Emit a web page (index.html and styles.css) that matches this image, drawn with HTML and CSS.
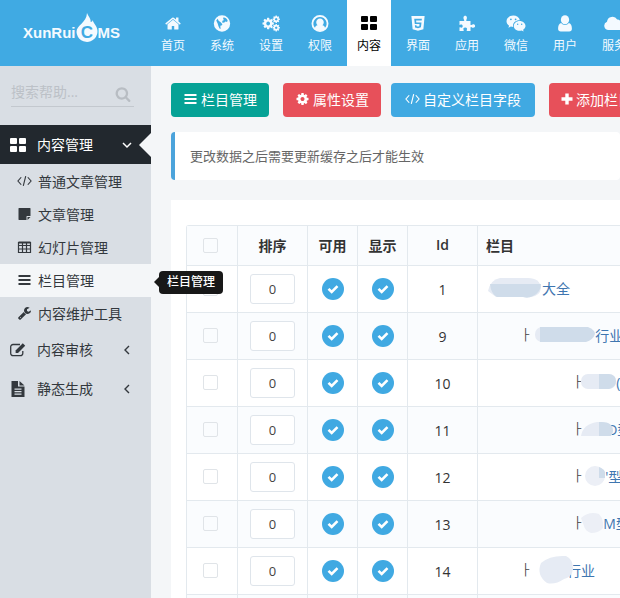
FILE: index.html
```html
<!DOCTYPE html>
<html lang="zh-CN">
<head>
    <meta charset="UTF-8">
    <title>栏目管理</title>
    <link rel="stylesheet" href="styles.css">
</head>
<body>

<!-- icon sprite -->
<svg class="sprite" aria-hidden="true">
    <symbol id="i-home" viewBox="0 0 1792 1792"><path d="M1472 992v480q0 26-19 45t-45 19h-384v-384h-256v384h-384q-26 0-45-19t-19-45v-480q0-1 .5-3t.5-3l575-474 575 474q1 2 1 6zm223-69l-62 74q-8 9-21 11h-3q-13 0-21-7l-692-577-692 577q-12 8-24 7-13-2-21-11l-62-74q-8-10-7-23.500t11-21.500l719-599q32-26 76-26t76 26l244 204v-195q0-14 9-23t23-9h192q14 0 23 9t9 23v408l219 182q10 8 11 21.500t-7 23.500z"/></symbol>
    <symbol id="i-globe" viewBox="0 0 16 16"><path fill-rule="evenodd" d="M8 .3a7.700 7.700 0 1 0 0 15.400A7.700 7.700 0 0 0 8 .3zM9.500 2.200l2.300.8 1.500 2-.5 1.500-1.600-.5-1.300 1.400-1.800-.3.300-1.600 1.500-.8-.9-1zM2.600 5.200l1.400-1.700.8 1.800 2 1.500 1.600 1.800-.8 1.200-1.200.4.300 3-1-.4-1-2.300L4 8.300z"/></symbol>
    <symbol id="i-cog" viewBox="0 0 1792 1792"><path d="M1152 896q0-106-75-181t-181-75-181 75-75 181 75 181 181 75 181-75 75-181zm512-109v222q0 12-8 23t-20 13l-185 28q-19 54-39 91 35 50 107 138 10 12 10 25t-9 23q-27 37-99 108t-94 71q-12 0-26-9l-138-108q-44 23-91 38-16 136-29 186-7 28-36 28h-222q-14 0-24.500-8.500t-11.500-21.500l-28-184q-49-16-90-37l-141 107q-10 9-25 9-14 0-25-11-126-114-165-168-7-10-7-23 0-12 8-23 15-21 51-66.500t54-70.500q-27-50-41-99l-183-27q-13-2-21-12.500t-8-23.500v-222q0-12 8-23t19-13l186-28q14-46 39-92-40-57-107-138-10-12-10-24 0-10 9-23 26-36 98.500-107.500t94.500-71.500q13 0 26 10l138 107q44-23 91-38 16-136 29-186 7-28 36-28h222q14 0 24.500 8.500t11.500 21.500l28 184q49 16 90 37l142-107q9-9 24-9 13 0 25 10 129 119 165 170 7 8 7 22 0 12-8 23-15 21-51 66.500t-54 70.500q26 50 41 98l183 28q13 2 21 12.500t8 23.500z"/></symbol>
    <symbol id="i-cogs" viewBox="0 0 20 18">
        <use href="#i-cog" x="0" y="2" width="14" height="14"/>
        <use href="#i-cog" x="11" y="0" width="9" height="9"/>
        <use href="#i-cog" x="11" y="9" width="9" height="9"/>
    </symbol>
    <symbol id="i-user-circle" viewBox="0 0 18 18"><path fill-rule="evenodd" d="M9 0a9 9 0 1 0 0 18A9 9 0 0 0 9 0zm0 2a7 7 0 0 1 5.300 11.500c-.4-1.500-1.300-2.400-2.700-2.700a4 4 0 1 0-5.200 0c-1.400.3-2.300 1.200-2.700 2.700A7 7 0 0 1 9 2z"/></symbol>
    <symbol id="i-grid" viewBox="0 0 16 14"><rect width="7" height="6" rx="1"/><rect x="9" width="7" height="6" rx="1"/><rect y="8" width="7" height="6" rx="1"/><rect x="9" y="8" width="7" height="6" rx="1"/></symbol>
    <symbol id="i-html5" viewBox="0 0 16 18"><path fill-rule="evenodd" d="M1 1h14l-1.300 14L8 16.800 2.300 15zm3 3 .6 5.600h5l-.2 2.200-1.400.4-1.500-.4-.1-1H4.700l.2 2.400L8 14l3.100-.9.600-5.200H6.200L6 5.800h5.900l.2-1.800z"/></symbol>
    <symbol id="i-puzzle" viewBox="0 0 17 17"><path d="M1 6h4.300c.5 0 .7-.4.400-.9C4.400 3 5 .8 6.700.8S9 3 7.800 5.100c-.2.500 0 .9.500.9H12v3.500c0 .6.500.8 1 .4 1.700-1.200 3.600-.5 3.600 1.200s-2 2.300-3.600 1.100c-.5-.3-1-.1-1 .4V16H8.600c-.5 0-.7-.4-.4-.9.800-1.300.3-2.700-1.500-2.700s-2.300 1.400-1.500 2.700c.3.500 0 .9-.5.900H1v-3.300c0-.5.300-.6.700-.4 1.300.9 2.500.3 2.500-1.200S2.900 9 1.700 9.800c-.4.200-.7.100-.7-.4z"/></symbol>
    <symbol id="i-wechat" viewBox="0 0 20 17"><path fill-rule="evenodd" d="M7.300.5C3.500.5.500 3 .5 6.200c0 1.800 1 3.400 2.600 4.500l-.7 2.100 2.500-1.200c.8.200 1.500.3 2.300.3A5.300 5.300 0 0 1 7 10.500c0-3 2.900-5.300 6.300-5.300h.6C13.200 2.500 10.500.5 7.300.5zM4.900 3.400a.9.900 0 1 1 0 1.800.9.900 0 0 1 0-1.800zm4.700 0a.9.900 0 1 1 0 1.800.9.900 0 0 1 0-1.800zM13.700 6c-3.300 0-5.900 2.200-5.900 4.900s2.600 4.800 5.900 4.800c.7 0 1.300-.1 1.900-.3l2 1-.5-1.700c1.500-1 2.400-2.300 2.400-3.800 0-2.700-2.700-4.900-5.800-4.900zm-2 2.600a.7.700 0 1 1 0 1.400.7.700 0 0 1 0-1.400zm4 0a.7.700 0 1 1 0 1.400.7.700 0 0 1 0-1.400z"/></symbol>
    <symbol id="i-user" viewBox="0 0 14 16"><ellipse cx="7" cy="4.500" rx="3.900" ry="4.300"/><path d="M3.300 7.500C1.300 8 .5 10 .5 13c0 1.600 1 2.500 2.500 2.500h8c1.500 0 2.500-.9 2.500-2.500 0-3-.8-5-2.800-5.500A5 5 0 0 1 7 9.400a5 5 0 0 1-3.700-1.900z"/></symbol>
    <symbol id="i-cloud" viewBox="0 0 20 14"><path d="M4.500 13.500A4.300 4.300 0 0 1 3 5.200 5.500 5.500 0 0 1 13.200 3a3.200 3.200 0 0 1 3.600 3.600 3.500 3.500 0 0 1-.6 6.900z"/></symbol>
    <symbol id="i-search" viewBox="0 0 1792 1792"><path d="M1216 832q0-185-131.500-316.500t-316.500-131.500-316.500 131.500-131.500 316.500 131.500 316.500 316.500 131.500 316.500-131.500 131.500-316.500zm512 832q0 52-38 90t-90 38q-54 0-90-38l-343-342q-179 124-399 124-143 0-273.500-55.500t-225-150-150-225-55.500-273.500 55.500-273.500 150-225 225-150 273.500-55.500 273.500 55.500 225 150 150 225 55.500 273.500q0 220-124 399l343 343q37 37 37 90z"/></symbol>
    <symbol id="i-code" viewBox="0 0 16 12"><path d="M4.500 2 1 6l3.500 4M11.500 2 15 6l-3.500 4M9.300.8 6.700 11.200" fill="none" stroke="currentColor" stroke-width="1.200"/></symbol>
    <symbol id="i-note" viewBox="0 0 14 14"><path d="M1.500 1h11c.3 0 .5.200.5.500V9H9.500c-.3 0-.5.200-.5.500V13H1.500c-.3 0-.5-.2-.5-.5v-11c0-.3.200-.5.500-.5zM10 10h3l-3 3z"/></symbol>
    <symbol id="i-table" viewBox="0 0 14 14"><path d="M1 2.500h12v10H1zM1 5.500h12M1 9h12M5 2.500v10M9 2.500v10" fill="none" stroke="currentColor" stroke-width="1.200"/><path d="M1 1.500h12v2H1z"/></symbol>
    <symbol id="i-bars" viewBox="0 0 14 14"><path d="M1 2h12v2H1zM1 6h12v2H1zM1 10h12v2H1z"/></symbol>
    <symbol id="i-wrench" viewBox="0 0 1792 1792"><path d="M448 1472q0-26-19-45t-45-19-45 19-19 45 19 45 45 19 45-19 19-45zm644-420l-682 682q-37 37-90 37-52 0-91-37l-106-108q-38-36-38-90 0-53 38-91l681-681q39 98 114.500 173.500t173.500 114.500zm634-435q0 39-23 106-47 134-164.500 217.500t-258.500 83.500q-185 0-316.500-131.500t-131.500-316.500 131.500-316.500 316.500-131.500q58 0 121.500 16.500t107.500 46.500q16 11 16 28t-16 28l-293 169v224l193 107q5-3 79-48.500t135.500-81 70.500-35.500q15 0 23.500 10t8.500 25z"/></symbol>
    <symbol id="i-edit" viewBox="0 0 16 16"><path d="M10 2.500H3A2.300 2.300 0 0 0 .7 4.800v6.500A2.300 2.300 0 0 0 3 13.600h7.500a2.300 2.300 0 0 0 2.300-2.300V9" fill="none" stroke="currentColor" stroke-width="1.300"/><path d="m12.800 1.300 2.400 2.400-7.200 7.200H5.600V8.500z"/></symbol>
    <symbol id="i-file" viewBox="0 0 16 16"><path fill-rule="evenodd" d="M1.500 0H8v5.500h6.500V16h-13zM9.500 0l5 4.500h-5zM4.500 7.500v1.200h7V7.500zm0 2.500v1.200h7V10zm0 2.500v1.200h7v-1.200z"/></symbol>
    <symbol id="i-down" viewBox="0 0 10 10"><path d="m1 3 4 4 4-4" fill="none" stroke="currentColor" stroke-width="1.500"/></symbol>
    <symbol id="i-left" viewBox="0 0 10 10"><path d="M7 1 3 5l4 4" fill="none" stroke="currentColor" stroke-width="1.400"/></symbol>
    <symbol id="i-plus" viewBox="0 0 12 12"><path d="M4.300.5h3.400v3.800h3.800v3.400H7.700v3.800H4.300V7.700H.5V4.300h3.800z"/></symbol>
    <symbol id="i-check" viewBox="0 0 12 12"><path d="m1.500 5.800 3.200 3.200 5.800-5.800" fill="none" stroke="currentColor" stroke-width="2.600"/></symbol>
</svg>

<header class="header">
    <a class="logo" href="#">
        <span>XunRui</span>
        <svg class="flame" viewBox="0 0 22 30">
            <path d="M11 0c1 3 4.500 6 3.500 9 1.500 0 2-1 2.200-2 .3 2 1.500 3 2.600 5A10.500 10.500 0 1 1 .5 19C.5 12 10.500 10 11 0z"/>
            <text x="11" y="25" text-anchor="middle">C</text>
        </svg>
        <span>MS</span>
    </a>
    <nav class="top-menu">
        <a href="#"><svg><use href="#i-home"/></svg>首页</a>
        <a href="#"><svg><use href="#i-globe"/></svg>系统</a>
        <a href="#"><svg><use href="#i-cogs"/></svg>设置</a>
        <a href="#"><svg><use href="#i-user-circle"/></svg>权限</a>
        <a href="#" class="active"><svg><use href="#i-grid"/></svg>内容</a>
        <a href="#"><svg><use href="#i-html5"/></svg>界面</a>
        <a href="#"><svg><use href="#i-puzzle"/></svg>应用</a>
        <a href="#"><svg><use href="#i-wechat"/></svg>微信</a>
        <a href="#"><svg><use href="#i-user"/></svg>用户</a>
        <a href="#"><svg><use href="#i-cloud"/></svg>服务</a>
    </nav>
</header>

<div class="page">
    <aside class="sidebar">
        <form class="search">
            <input type="text" placeholder="搜索帮助..." aria-label="搜索帮助">
            <button type="button" aria-label="搜索"><svg><use href="#i-search"/></svg></button>
        </form>
        <a href="#" class="group open">
            <svg><use href="#i-grid"/></svg><span>内容管理</span><svg class="arrow"><use href="#i-down"/></svg>
        </a>
        <ul class="sub-menu">
            <li><a href="#"><svg><use href="#i-code"/></svg>普通文章管理</a></li>
            <li><a href="#"><svg><use href="#i-note"/></svg>文章管理</a></li>
            <li><a href="#"><svg><use href="#i-table"/></svg>幻灯片管理</a></li>
            <li class="active"><a href="#"><svg><use href="#i-bars"/></svg>栏目管理</a><span class="tooltip" role="tooltip">栏目管理</span></li>
            <li><a href="#"><svg><use href="#i-wrench"/></svg>内容维护工具</a></li>
        </ul>
        <a href="#" class="group">
            <svg><use href="#i-edit"/></svg><span>内容审核</span><svg class="arrow"><use href="#i-left"/></svg>
        </a>
        <a href="#" class="group">
            <svg><use href="#i-file"/></svg><span>静态生成</span><svg class="arrow"><use href="#i-left"/></svg>
        </a>
    </aside>

    <main class="content">
        <div class="toolbar">
            <button type="button" class="btn green"><svg><use href="#i-bars"/></svg>栏目管理</button>
            <button type="button" class="btn red"><svg><use href="#i-cog"/></svg>属性设置</button>
            <button type="button" class="btn blue"><svg><use href="#i-code"/></svg>自定义栏目字段</button>
            <button type="button" class="btn red"><svg class="small"><use href="#i-plus"/></svg>添加栏目</button>
        </div>

        <p class="note">更改数据之后需要更新缓存之后才能生效</p>

        <div class="card">
            <table>
                <colgroup>
                    <col class="col-check"><col class="col-order"><col class="col-flag"><col class="col-flag"><col class="col-id"><col>
                </colgroup>
                <thead>
                    <tr>
                        <th class="check"><input type="checkbox" aria-label="全选"></th>
                        <th>排序</th>
                        <th>可用</th>
                        <th>显示</th>
                        <th>Id</th>
                        <th class="name">栏目</th>
                    </tr>
                </thead>
                <tbody>
                    <tr>
                        <td class="check"><input type="checkbox" aria-label="选择 1"></td>
                        <td><input type="text" class="order" value="0" aria-label="排序 1"></td>
                        <td><a href="#" class="flag" aria-label="可用"><svg><use href="#i-check"/></svg></a></td>
                        <td><a href="#" class="flag" aria-label="显示"><svg><use href="#i-check"/></svg></a></td>
                        <td>1</td>
                        <td class="name"><div class="cat">
                            <svg class="mask" width="56" height="22"><path class="light" d="M2 14Q4 3 14 1h28q12 0 13 10-1 8-10 9H10z"/><path class="dark" d="M4 7h51q0 8-8 12-5 3-10 1H11Q5 17 4 7z"/></svg>
                            <a href="#">大全</a>
                        </div></td>
                    </tr>
                    <tr>
                        <td class="check"><input type="checkbox" aria-label="选择 9"></td>
                        <td><input type="text" class="order" value="0" aria-label="排序 9"></td>
                        <td><a href="#" class="flag" aria-label="可用"><svg><use href="#i-check"/></svg></a></td>
                        <td><a href="#" class="flag" aria-label="显示"><svg><use href="#i-check"/></svg></a></td>
                        <td>9</td>
                        <td class="name"><div class="cat level-1">
                            <span class="tree">├</span>
                            <svg class="mask gap" width="60" height="16"><rect class="light" width="30" height="15" rx="7"/><path class="dark" d="M5 0h48q7 3 7 7-2 6-9 8H5z"/></svg>
                            <a href="#">行业</a>
                        </div></td>
                    </tr>
                    <tr>
                        <td class="check"><input type="checkbox" aria-label="选择 10"></td>
                        <td><input type="text" class="order" value="0" aria-label="排序 10"></td>
                        <td><a href="#" class="flag" aria-label="可用"><svg><use href="#i-check"/></svg></a></td>
                        <td><a href="#" class="flag" aria-label="显示"><svg><use href="#i-check"/></svg></a></td>
                        <td>10</td>
                        <td class="name"><div class="cat level-2">
                            <span class="tree">├</span>
                            <svg class="mask" width="35" height="16"><rect class="light" width="35" height="15" rx="7"/><path class="dark" d="M18 0h10q7 1 7 7t-7 8H18z"/></svg>
                            <a href="#">(型</a>
                        </div></td>
                    </tr>
                    <tr>
                        <td class="check"><input type="checkbox" aria-label="选择 11"></td>
                        <td><input type="text" class="order" value="0" aria-label="排序 11"></td>
                        <td><a href="#" class="flag" aria-label="可用"><svg><use href="#i-check"/></svg></a></td>
                        <td><a href="#" class="flag" aria-label="显示"><svg><use href="#i-check"/></svg></a></td>
                        <td>11</td>
                        <td class="name"><div class="cat level-2">
                            <span class="tree">├</span>
                            <svg class="mask over" width="33" height="16"><path class="light" d="M0 15Q2 3 16 1h6q10 2 10 10l-2 4z"/><path class="dark" d="M18 1q14-1 14 9l-2 5H18z"/></svg>
                            <a href="#">D型</a>
                        </div></td>
                    </tr>
                    <tr>
                        <td class="check"><input type="checkbox" aria-label="选择 12"></td>
                        <td><input type="text" class="order" value="0" aria-label="排序 12"></td>
                        <td><a href="#" class="flag" aria-label="可用"><svg><use href="#i-check"/></svg></a></td>
                        <td><a href="#" class="flag" aria-label="显示"><svg><use href="#i-check"/></svg></a></td>
                        <td>12</td>
                        <td class="name"><div class="cat level-2">
                            <span class="tree">├</span>
                            <svg class="mask" width="24" height="20"><circle class="pale" cx="14" cy="10" r="10"/><path class="dark" d="M18 1q5 2 6 5v6h-6z"/></svg>
                            <a href="#">'型</a>
                        </div></td>
                    </tr>
                    <tr>
                        <td class="check"><input type="checkbox" aria-label="选择 13"></td>
                        <td><input type="text" class="order" value="0" aria-label="排序 13"></td>
                        <td><a href="#" class="flag" aria-label="可用"><svg><use href="#i-check"/></svg></a></td>
                        <td><a href="#" class="flag" aria-label="显示"><svg><use href="#i-check"/></svg></a></td>
                        <td>13</td>
                        <td class="name"><div class="cat level-2">
                            <span class="tree">├</span>
                            <svg class="mask" width="22" height="20"><path class="pale" d="M0 5Q8-2 18 1q5 5 4 14-4 5-12 5-6-2-7-7z"/></svg>
                            <a href="#">M型</a>
                        </div></td>
                    </tr>
                    <tr>
                        <td class="check"><input type="checkbox" aria-label="选择 14"></td>
                        <td><input type="text" class="order" value="0" aria-label="排序 14"></td>
                        <td><a href="#" class="flag" aria-label="可用"><svg><use href="#i-check"/></svg></a></td>
                        <td><a href="#" class="flag" aria-label="显示"><svg><use href="#i-check"/></svg></a></td>
                        <td>14</td>
                        <td class="name"><div class="cat level-1">
                            <span class="tree">├</span>
                            <svg class="mask gap over" width="38" height="30"><path class="light" d="M5 8Q14 0 30 1q7 3 7 13-1 8-9 10-9 6-17 4Q0 20 5 8z"/></svg>
                            <a href="#">行业</a>
                        </div></td>
                    </tr>
                    <tr>
                        <td class="check"><input type="checkbox" aria-label="选择 15"></td>
                        <td><input type="text" class="order" value="0" aria-label="排序 15"></td>
                        <td></td>
                        <td></td>
                        <td></td>
                        <td class="name"></td>
                    </tr>
                </tbody>
            </table>
        </div>
    </main>
</div>

</body>
</html>
```
FILE: styles.css
```css
* {
    box-sizing: border-box;
}
html, body {
    height: 100%;
}
body {
    margin: 0;
    display: flex;
    flex-direction: column;
    overflow: hidden;
    font-family: "Open Sans", "Noto Sans CJK SC", sans-serif;
    font-size: 14px;
    color: #333;
    background: #f4f6f8;
}
a {
    text-decoration: none;
}
svg {
    fill: currentColor;
    flex: none;
}
input, button {
    font-family: inherit;
}
.sprite {
    position: absolute;
    width: 0;
    height: 0;
}

/* header */
.header {
    display: flex;
    flex: none;
    height: 66px;
    background: #40aae3;
}
.logo {
    display: flex;
    flex: none;
    align-items: center;
    width: 151px;
    padding: 0 0 2px 23px;
    color: #f4faff;
    font: bold 15px "Liberation Sans", sans-serif;
}
.flame {
    width: 22px;
    height: 30px;
    margin-bottom: 8px;
}
.flame text {
    font-size: 17px;
    fill: #40aae3;
}
.top-menu {
    display: flex;
    gap: 5px;
}
.top-menu a {
    display: flex;
    flex: none;
    flex-direction: column;
    align-items: center;
    gap: 5px;
    width: 44px;
    padding-top: 15px;
    font-size: 12px;
    line-height: 18px;
    color: #f4faff;
}
.top-menu svg {
    width: 20px;
    height: 17px;
}
.top-menu .active {
    background: #fff;
    color: #000;
}
.top-menu .active svg {
    height: 14px;
    margin: 1px 0 2px;
}

/* sidebar */
.page {
    display: flex;
    flex: 1;
    min-height: 0;
}
.sidebar {
    flex: none;
    width: 151px;
    background: #d9dee4;
}
.search {
    display: flex;
    align-items: center;
    height: 29px;
    margin: 12px 17px 18px 11px;
    border-bottom: 1px solid #c3c8ce;
}
.search input {
    flex: 1;
    min-width: 0;
    padding: 0 0 2px;
    border: 0;
    background: none;
    font-size: 14px;
}
.search input::placeholder {
    color: #bcc1c7;
}
.search button {
    padding: 4px 3px 0 0;
    border: 0;
    background: none;
    color: #b8bdc3;
}
.search svg {
    display: block;
    width: 16px;
    height: 16px;
}
.group {
    position: relative;
    display: flex;
    align-items: center;
    height: 39px;
    padding: 0 19px 0 10px;
    color: #33383d;
}
.group svg {
    width: 16px;
    height: 16px;
}
.group span {
    flex: 1;
    margin-left: 11px;
    padding-bottom: 2px;
}
.group .arrow {
    width: 10px;
    height: 10px;
}
.group.open {
    background: #22282e;
    color: #fff;
}
.group.open::after {
    content: "";
    position: absolute;
    right: 0;
    top: 8px;
    border: 12px solid transparent;
    border-left: 0;
    border-right-color: #f4f6f8;
}
.sub-menu {
    margin: 0;
    padding: 1px 0 0;
    list-style: none;
}
.sub-menu li {
    position: relative;
}
.sub-menu a {
    display: flex;
    align-items: center;
    gap: 6px;
    height: 33px;
    padding: 0 0 2px 17px;
    color: #33383d;
}
.sub-menu svg {
    width: 15px;
    height: 14px;
}
.sub-menu .active {
    background: #f4f6f8;
}
.tooltip {
    position: absolute;
    left: 159px;
    top: 7px;
    z-index: 10;
    padding: 0 8px 1px;
    border-radius: 4px;
    background: #181818;
    color: #fff;
    font-size: 12px;
    font-weight: 500;
    line-height: 22px;
    white-space: nowrap;
}
.tooltip::before {
    content: "";
    position: absolute;
    left: -5px;
    top: 6px;
    border: 5px solid transparent;
    border-left: 0;
    border-right-color: #181818;
}

/* content */
.content {
    flex: 1;
    min-width: 0;
    padding: 17px 0 0 20px;
    overflow: hidden;
}
.toolbar {
    display: flex;
}
.btn {
    display: flex;
    flex: none;
    align-items: center;
    gap: 3px;
    height: 34px;
    margin-right: 14px;
    padding: 0 12px 2px;
    border: 0;
    border-radius: 4px;
    color: #fff;
    font-size: 14px;
}
.btn svg {
    width: 15px;
    height: 14px;
}
.btn .small {
    width: 12px;
    height: 12px;
}
.btn.green {
    background: #06a296;
}
.btn.red {
    margin-right: 10px;
    background: #e7505a;
}
.btn.blue {
    padding: 0 14px 2px;
    background: #40a9e2;
}
.note {
    margin: 15px 0 20px;
    padding: 0 15px;
    border-left: 4px solid #4ba3db;
    border-radius: 4px;
    background: #fff;
    color: #666;
    font-size: 13px;
    line-height: 48px;
}
.card {
    padding: 25px 0 0 15px;
    background: #fff;
}

/* table */
table {
    width: 100%;
    table-layout: fixed;
    border-spacing: 0;
    border-top: 1px solid #e3e9ee;
    border-left: 1px solid #e3e9ee;
    border-radius: 3px 0 0 0;
}
.col-check {
    width: 51px;
}
.col-order, .col-id {
    width: 70px;
}
.col-flag {
    width: 50px;
}
th, td {
    height: 47px;
    padding: 0;
    border-right: 1px solid #e3e9ee;
    border-bottom: 1px solid #e3e9ee;
    text-align: center;
    vertical-align: middle;
}
th {
    height: 40px;
    padding-bottom: 2px;
    font-weight: 600;
}
thead tr, tbody tr:nth-child(even) {
    background: #fafcfe;
}
.check {
    padding: 0 4px 1px 0;
}
.name {
    padding-left: 8px;
    border-right: 0;
    overflow: hidden;
    text-align: left;
    white-space: nowrap;
}
input[type="checkbox"] {
    display: block;
    width: 15px;
    height: 15px;
    margin: 0 auto;
    border: 1px solid #e0e4e8;
    border-radius: 2px;
    appearance: none;
}
.order {
    display: block;
    width: 45px;
    height: 30px;
    margin: 0 auto;
    padding: 0;
    border: 1px solid #dfe5eb;
    border-radius: 3px;
    background: #fff;
    color: #444;
    font-size: 13px;
    text-align: center;
}
.flag {
    display: flex;
    align-items: center;
    justify-content: center;
    width: 22px;
    height: 22px;
    margin: 0 auto;
    border-radius: 50%;
    background: #40a9e2;
    color: #fff;
}
.flag svg {
    width: 12px;
    height: 12px;
}
.cat {
    display: flex;
    align-items: center;
    padding-bottom: 2px;
}
.cat a {
    color: #3f76b0;
}
.level-1 {
    padding-left: 36px;
}
.level-2 {
    padding-left: 88px;
}
.tree {
    width: 8px;
    font: bold 12px "Liberation Mono", monospace;
    color: #444;
}
.mask {
    position: relative;
}
.mask.gap {
    margin-left: 6px;
}
.mask.over {
    margin-right: -7px;
}
.mask .light {
    fill: #e6ebf4;
}
.mask .pale {
    fill: #eceff6;
}
.mask .dark {
    fill: #cfdcea;
}
```
